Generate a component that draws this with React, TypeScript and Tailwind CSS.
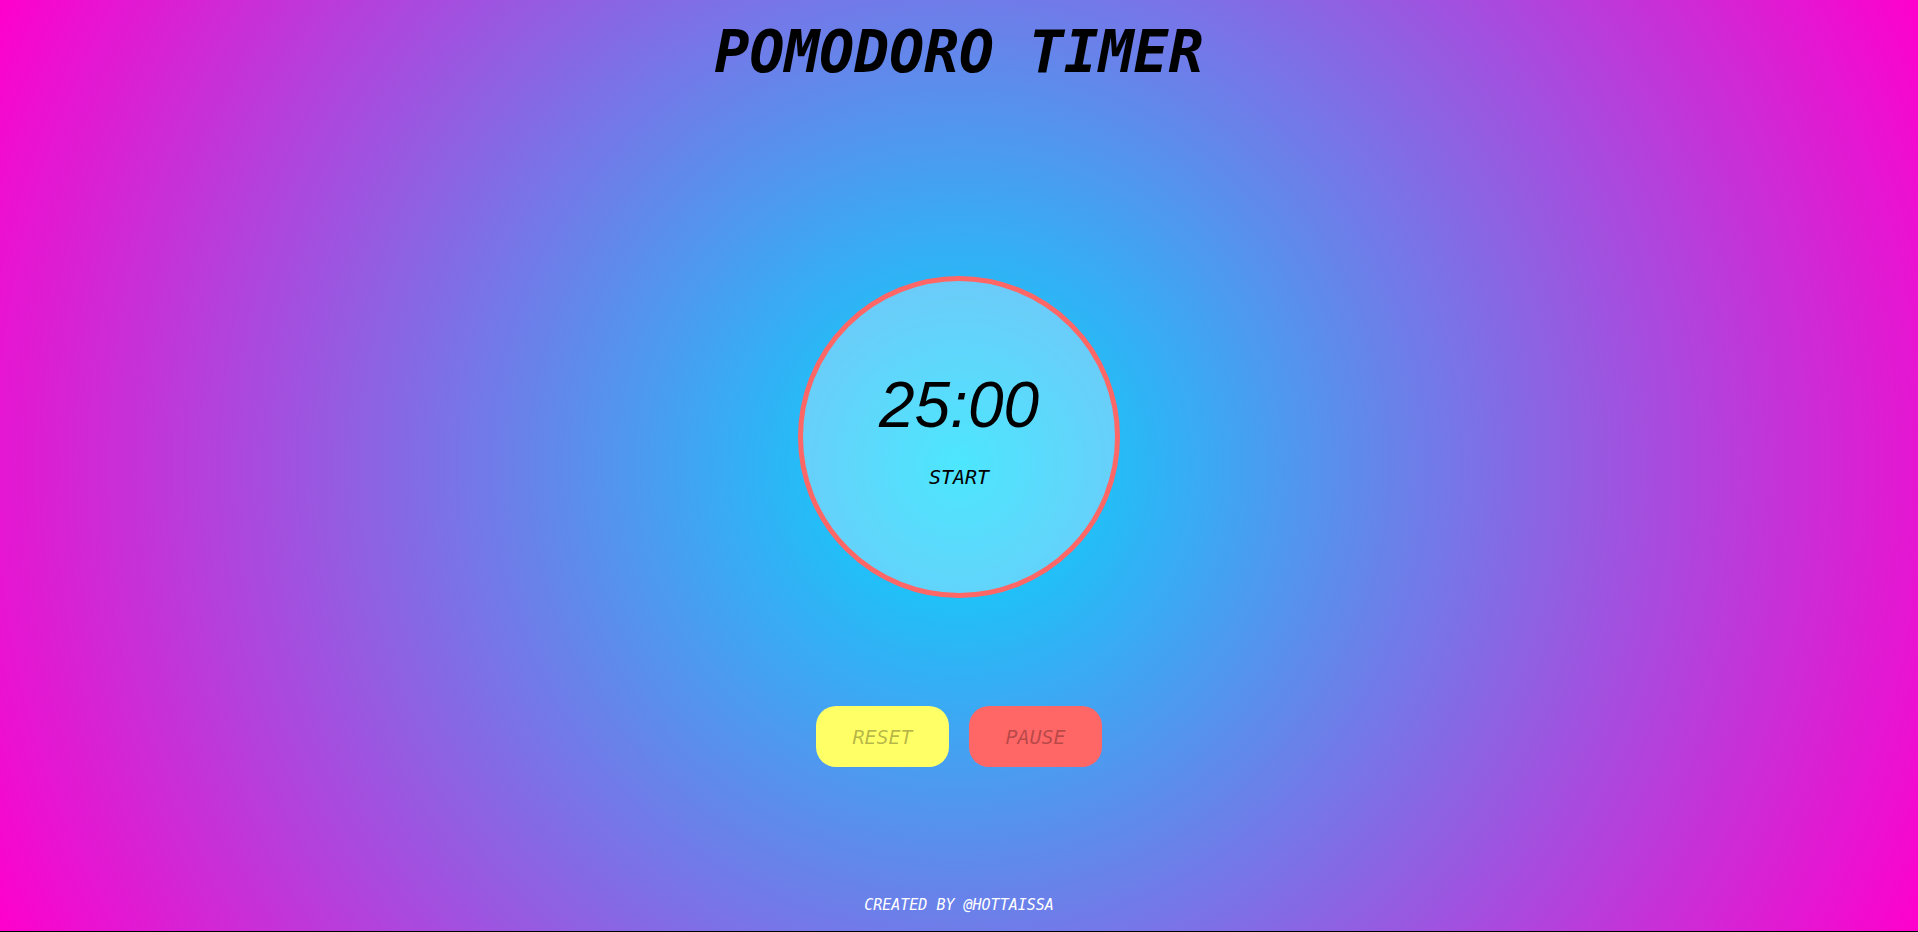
import { useEffect, useState } from "react";

const SESSION_SECONDS = 25 * 60;

function formatTime(total: number) {
  const minutes = String(Math.floor(total / 60)).padStart(2, "0");
  const seconds = String(total % 60).padStart(2, "0");
  return `${minutes}:${seconds}`;
}

const actionClass =
  "h-[61px] w-[133px] rounded-[20px] text-xl italic text-black enabled:cursor-pointer disabled:text-black/30";

export default function App() {
  const [left, setLeft] = useState(SESSION_SECONDS);
  const [running, setRunning] = useState(false);

  useEffect(() => {
    if (!running) return;
    const id = window.setInterval(() => setLeft((s) => Math.max(0, s - 1)), 1000);
    return () => window.clearInterval(id);
  }, [running]);

  const reset = () => {
    setRunning(false);
    setLeft(SESSION_SECONDS);
  };

  return (
    <div className="flex min-h-screen flex-col items-center justify-between border-b border-black bg-[radial-gradient(circle,#00dcff,#ff00cc)] font-['DejaVu_Sans_Mono',monospace] uppercase">
      <h1 className="pt-[18px] text-center text-[58px] leading-[68px] font-bold italic text-black">
        Pomodoro Timer
      </h1>

      <main className="flex flex-col items-center gap-[108px] pt-16">
        <button
          type="button"
          onClick={() => setRunning(true)}
          className="flex size-[322px] cursor-pointer flex-col items-center justify-center gap-7 rounded-full border-5 border-[#ff6666] bg-white/30 pb-3 italic text-black uppercase"
        >
          <span className="font-['Liberation_Sans',sans-serif] text-[64px] leading-[64px]">
            {formatTime(left)}
          </span>
          <span className="text-xl leading-6">Start</span>
        </button>

        <div className="flex gap-5">
          <button type="button" disabled={!running} onClick={reset} className={`${actionClass} bg-[#ffff66] uppercase`}>
            Reset
          </button>
          <button type="button" disabled={!running} onClick={() => setRunning(false)} className={`${actionClass} bg-[#ff6666] uppercase`}>
            Pause
          </button>
        </div>
      </main>

      <footer className="pb-[14px] text-[15px] leading-6 text-white italic">Created by @hottaissa</footer>
    </div>
  );
}
